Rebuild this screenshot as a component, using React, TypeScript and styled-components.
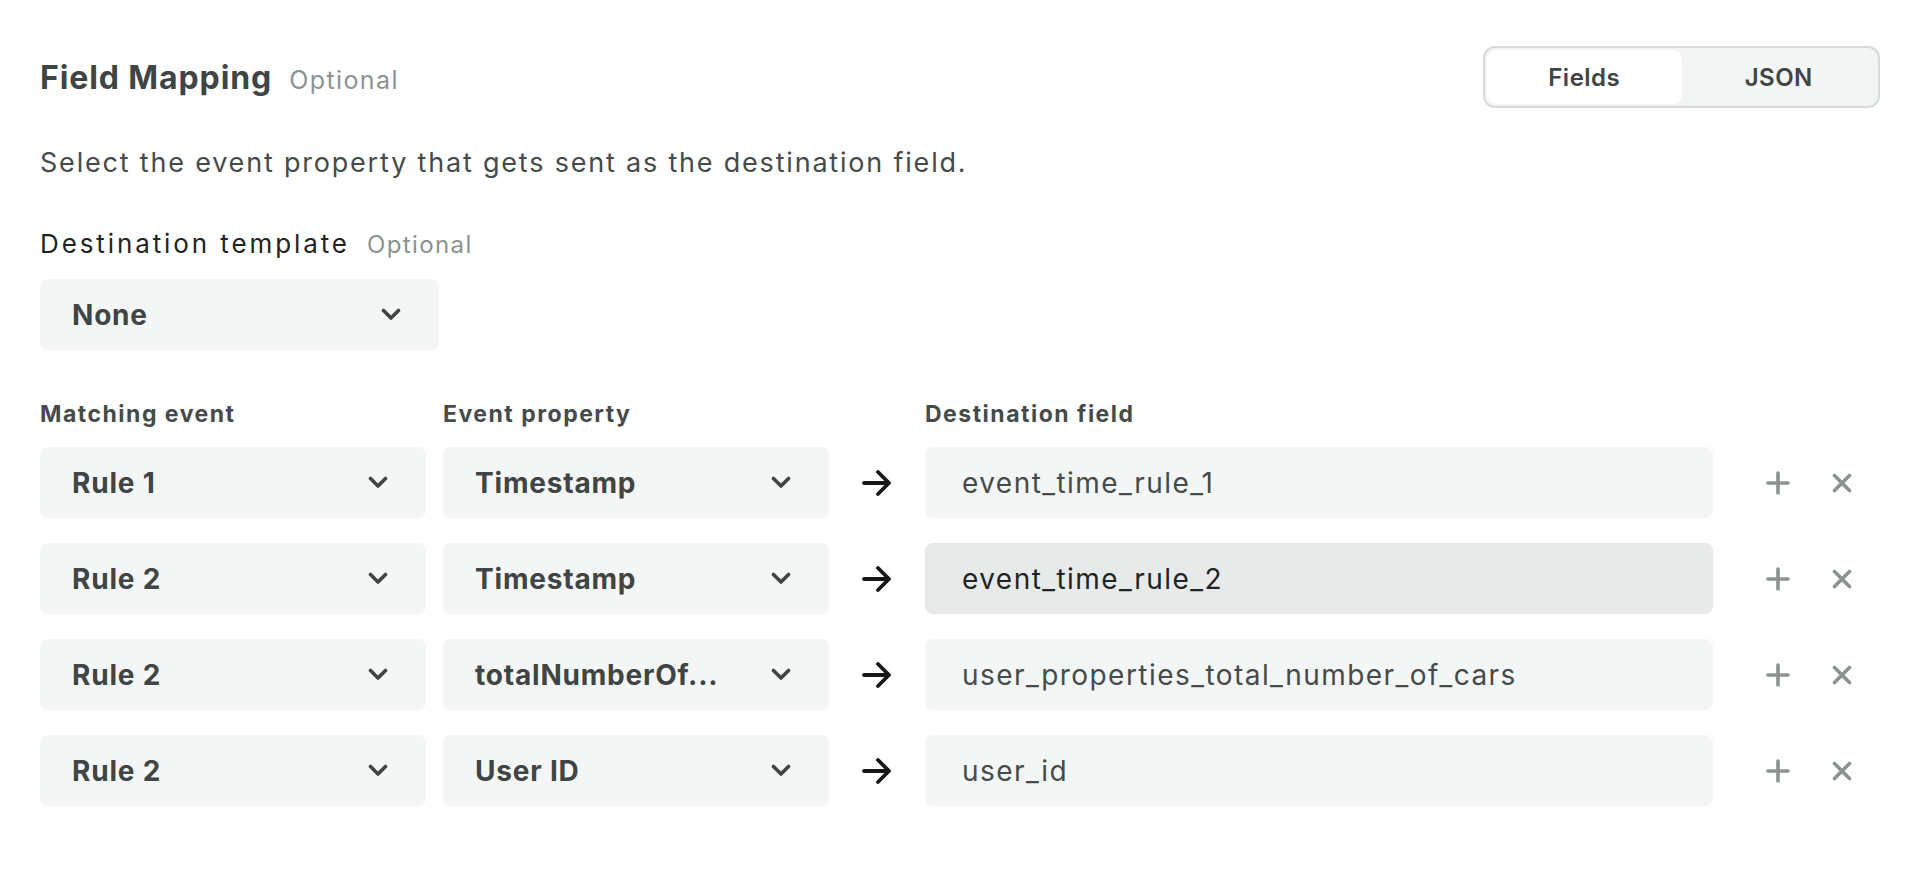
import React from "react";
import styled, { createGlobalStyle } from "styled-components";

const GlobalStyle = createGlobalStyle`
  html, body {
    margin: 0;
    padding: 0;
    background: #ffffff;
  }
  body {
    font-family: Inter, "Noto Sans", sans-serif;
    color: #3f4545;
  }
`;

const Page = styled.div`
  padding: 46px 28px 40px 40px;
`;

const HeaderRow = styled.div`
  display: flex;
  align-items: center;
  justify-content: space-between;
  height: 62px;
`;

const TitleGroup = styled.div`
  display: flex;
  align-items: baseline;
  gap: 17px;
`;

const Title = styled.h2`
  margin: 0;
  font-size: 32px;
  font-weight: 700;
  letter-spacing: 0.9px;
  color: #3f4545;
`;

const OptionalTag = styled.span<{ $size?: number }>`
  font-size: ${(p) => p.$size ?? 25}px;
  font-weight: 400;
  letter-spacing: 1.4px;
  color: #8b9392;
`;

const Toggle = styled.div`
  display: flex;
  width: 397px;
  height: 62px;
  box-sizing: border-box;
  border: 2px solid #d6dad9;
  border-radius: 12px;
  background: #f3f5f4;
  padding: 2px;
`;

const ToggleOption = styled.button<{ $active?: boolean }>`
  flex: 1;
  border: none;
  border-radius: 9px;
  background: ${(p) => (p.$active ? "#ffffff" : "transparent")};
  font-family: inherit;
  font-size: 24px;
  font-weight: 600;
  letter-spacing: 0.5px;
  color: #3f4545;
  cursor: pointer;
`;

const Description = styled.p`
  margin: 37px 0 0;
  font-size: 27px;
  line-height: 36px;
  letter-spacing: 1.8px;
  color: #454b4b;
`;

const FieldLabel = styled.div`
  margin-top: 45px;
  display: flex;
  align-items: baseline;
  gap: 17px;
  font-size: 26px;
  line-height: 36px;
  letter-spacing: 2.9px;
  color: #1f2424;
`;

const SelectBox = styled.div<{ $width: number }>`
  display: flex;
  align-items: center;
  justify-content: space-between;
  box-sizing: border-box;
  width: ${(p) => p.$width}px;
  height: 71px;
  padding: 0 38px 0 32px;
  background: #f4f6f5;
  border-radius: 8px;
  font-size: 28px;
  font-weight: 700;
  letter-spacing: 0.8px;
  color: #3f4545;
  white-space: nowrap;
  overflow: hidden;
`;

const TemplateSelect = styled(SelectBox)`
  margin-top: 16px;
`;

const Grid = styled.div`
  display: grid;
  grid-template-columns: 386px 403px 96px 788px auto;
  row-gap: 25px;
  margin-top: 48px;
  align-items: center;
`;

const ColumnHeader = styled.div<{ $offset?: number }>`
  margin-left: ${(p) => p.$offset ?? 0}px;
  margin-bottom: -8px;
  font-size: 23px;
  font-weight: 700;
  line-height: 32px;
  letter-spacing: 1.5px;
  color: #454b4b;
  white-space: nowrap;
`;

const PropertyCell = styled.div`
  padding-left: 17px;
`;

const ArrowCell = styled.div`
  display: flex;
  justify-content: center;
`;

const DestinationInput = styled.div<{ $focused?: boolean }>`
  display: flex;
  align-items: center;
  box-sizing: border-box;
  height: 71px;
  padding-left: 37px;
  border-radius: 8px;
  background: ${(p) => (p.$focused ? "#e8eaea" : "#f4f6f5")};
  font-size: 28px;
  letter-spacing: 1.45px;
  color: ${(p) => (p.$focused ? "#1f2424" : "#454b4b")};
  white-space: nowrap;
`;

const Actions = styled.div`
  display: flex;
  align-items: center;
  gap: 42px;
  padding-left: 53px;
`;

const IconButton = styled.button`
  display: flex;
  align-items: center;
  justify-content: center;
  padding: 0;
  border: none;
  background: none;
  cursor: pointer;
  color: #8a9392;
`;

const Chevron = () => (
  <svg width="20" height="13" viewBox="0 0 20 13" fill="none">
    <path d="M2.5 2.5L10 10L17.5 2.5" stroke="#3f4545" strokeWidth="3.6" strokeLinecap="round" strokeLinejoin="round" />
  </svg>
);

const Arrow = () => (
  <svg width="30" height="26" viewBox="0 0 30 26" fill="none">
    <path d="M2 13H27M16 2L27 13L16 24" stroke="#151717" strokeWidth="3.8" strokeLinecap="round" strokeLinejoin="round" />
  </svg>
);

const PlusIcon = () => (
  <svg width="24" height="24" viewBox="0 0 24 24" fill="none">
    <path d="M12 2V22M2 12H22" stroke="currentColor" strokeWidth="3.6" strokeLinecap="round" />
  </svg>
);

const CloseIcon = () => (
  <svg width="20" height="20" viewBox="0 0 20 20" fill="none">
    <path d="M2.5 2.5L17.5 17.5M17.5 2.5L2.5 17.5" stroke="currentColor" strokeWidth="3.6" strokeLinecap="round" />
  </svg>
);

const rows = [
  { event: "Rule 1", property: "Timestamp", destination: "event_time_rule_1" },
  { event: "Rule 2", property: "Timestamp", destination: "event_time_rule_2", focused: true },
  { event: "Rule 2", property: "totalNumberOf...", destination: "user_properties_total_number_of_cars" },
  { event: "Rule 2", property: "User ID", destination: "user_id" },
];

export default function App() {
  return (
    <>
      <GlobalStyle />
      <Page>
        <HeaderRow>
          <TitleGroup>
            <Title>Field Mapping</Title>
            <OptionalTag>Optional</OptionalTag>
          </TitleGroup>
          <Toggle>
            <ToggleOption $active>Fields</ToggleOption>
            <ToggleOption>JSON</ToggleOption>
          </Toggle>
        </HeaderRow>

        <Description>Select the event property that gets sent as the destination field.</Description>

        <FieldLabel>
          Destination template
          <OptionalTag $size={24}>Optional</OptionalTag>
        </FieldLabel>
        <TemplateSelect $width={399}>
          None
          <Chevron />
        </TemplateSelect>

        <Grid>
          <ColumnHeader>Matching event</ColumnHeader>
          <ColumnHeader $offset={17}>Event property</ColumnHeader>
          <div />
          <ColumnHeader>Destination field</ColumnHeader>
          <div />

          {rows.map((row, i) => (
            <React.Fragment key={i}>
              <SelectBox $width={386}>
                {row.event}
                <Chevron />
              </SelectBox>
              <PropertyCell>
                <SelectBox $width={386}>
                  {row.property}
                  <Chevron />
                </SelectBox>
              </PropertyCell>
              <ArrowCell>
                <Arrow />
              </ArrowCell>
              <DestinationInput $focused={row.focused}>{row.destination}</DestinationInput>
              <Actions>
                <IconButton aria-label="Add">
                  <PlusIcon />
                </IconButton>
                <IconButton aria-label="Remove">
                  <CloseIcon />
                </IconButton>
              </Actions>
            </React.Fragment>
          ))}
        </Grid>
      </Page>
    </>
  );
}
